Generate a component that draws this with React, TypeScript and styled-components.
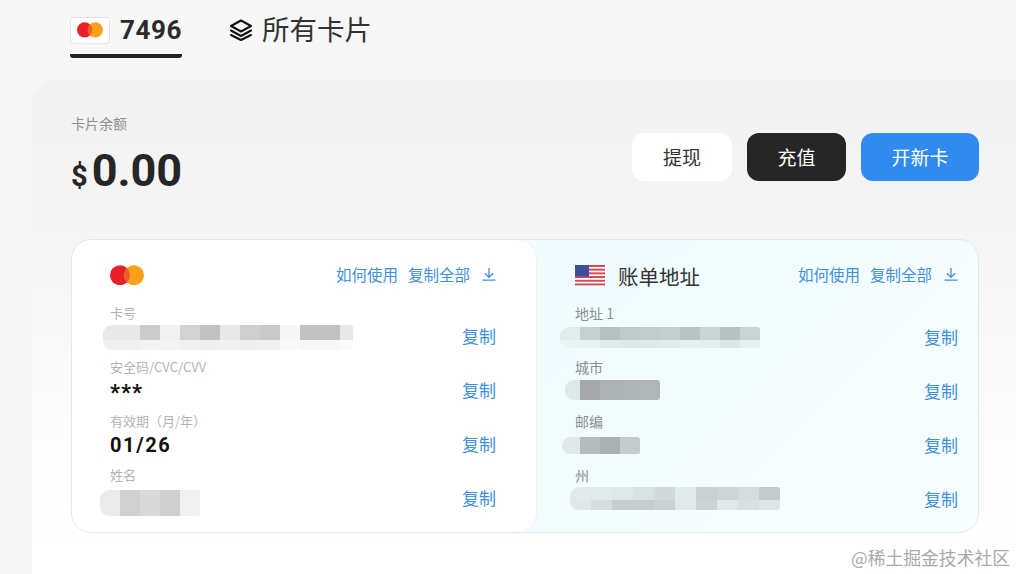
import React from "react";
import styled, { createGlobalStyle } from "styled-components";

const CJK = `"Noto Sans CJK SC", "Noto Sans", sans-serif`;

const GlobalStyle = createGlobalStyle`
  html, body {
    margin: 0;
    height: 574px;
    overflow: hidden;
    background: #f7f7f7;
    font-family: ${CJK};
  }
`;

const Page = styled.div`
  position: relative;
  width: 1016px;
  height: 574px;
  overflow: hidden;
`;

const Tabs = styled.nav`
  display: flex;
  align-items: flex-start;
  gap: 47px;
  height: 80px;
  padding-left: 70px;
  box-sizing: border-box;
`;

const ActiveTab = styled.div`
  display: flex;
  align-items: center;
  gap: 10px;
  height: 58px;
  padding: 14px 0 8px;
  box-sizing: border-box;
  border-bottom: 4px solid #222;
  border-radius: 0 0 3px 3px;
`;

const LogoBox = styled.div`
  display: flex;
  align-items: center;
  justify-content: center;
  width: 40px;
  height: 27px;
  background: #fff;
  border: 1px solid #e2e2e2;
  border-radius: 4px;
  box-sizing: border-box;
`;

const CardDigits = styled.span`
  font-family: Roboto, sans-serif;
  font-weight: 700;
  font-size: 26px;
  letter-spacing: 0.6px;
  color: #2b2b2b;
`;

const PlainTab = styled.div`
  display: flex;
  align-items: center;
  gap: 9px;
  height: 60px;
  color: #333;
`;

const PlainTabTitle = styled.span`
  font-size: 27.5px;
  line-height: 1;
  margin-top: -3px;
`;

const Panel = styled.main`
  margin-left: 32px;
  height: 494px;
  padding: 32px 37px 0 39px;
  box-sizing: border-box;
  border-radius: 22px 0 0 0;
  background: linear-gradient(180deg, #f2f2f2 0%, #f5f5f5 30%, #fdfdfd 75%, #fff 100%);
`;

const BalanceRow = styled.section`
  display: flex;
  justify-content: space-between;
  height: 127px;
`;

const BalanceLabel = styled.div`
  font-size: 14px;
  line-height: 22px;
  color: #8f8f8f;
`;

const BalanceAmount = styled.div`
  display: flex;
  align-items: baseline;
  gap: 4px;
  margin-top: 9px;
  font-family: Roboto, sans-serif;
  font-weight: 700;
  color: #262626;
  font-size: 45px;
  line-height: 56px;
`;

const Currency = styled.span`
  font-size: 29px;
`;

const Actions = styled.div`
  display: flex;
  gap: 15px;
  padding-top: 21px;
  align-items: flex-start;
`;

const ActionButton = styled.button<{ $bg: string; $fg: string; $width: number }>`
  width: ${(p) => p.$width}px;
  height: 48px;
  border: 0;
  border-radius: 12px;
  background: ${(p) => p.$bg};
  color: ${(p) => p.$fg};
  font-family: ${CJK};
  font-size: 19px;
  padding: 0 0 2px;
`;

const CardSheet = styled.section`
  display: grid;
  grid-template-columns: 464px 1fr;
  width: 908px;
  height: 294px;
  box-sizing: border-box;
  border: 1px solid #e4e7e9;
  border-radius: 20px;
  background: linear-gradient(135deg, #effbfd 0%, #f1fcfe 55%, #f9feff 100%);
  overflow: hidden;
`;

const CardSide = styled.div`
  padding: 0 40px 0 38px;
  background: #fff;
  border-radius: 0 20px 20px 0;
  box-shadow: 1px 0 1px #eef3f4;
`;

const BillingSide = styled.div`
  padding: 0 20px 0 39px;
`;

const SideHeader = styled.header`
  display: flex;
  align-items: center;
  justify-content: space-between;
  height: 64px;
  padding-top: 6px;
  box-sizing: border-box;
`;

const Brand = styled.div`
  display: flex;
  align-items: center;
  gap: 13px;
  margin-top: 2px;
  font-size: 20.5px;
  color: #333;
`;

const HeaderLinks = styled.div`
  display: flex;
  align-items: center;
  gap: 10px;
  margin-top: -2px;
  color: #3d8fe0;
  font-size: 15.5px;
  line-height: 20px;
`;

const DownloadGlyph = styled.svg`
  margin-left: 2px;
  fill: none;
  stroke: #3d8fe0;
  stroke-width: 1.3;
`;

const FieldRow = styled.div`
  display: flex;
  justify-content: space-between;
  align-items: flex-end;
  height: 54px;
`;

const FieldBody = styled.div`
  display: flex;
  flex-direction: column;
  height: 54px;
`;

const FieldLabel = styled.div<{ $dark?: boolean }>`
  font-size: ${(p) => (p.$dark ? 14 : 13)}px;
  line-height: 18px;
  color: ${(p) => (p.$dark ? "#8a8f90" : "#b4b4b4")};
  white-space: nowrap;
`;

const FieldValue = styled.div<{ $stars?: boolean }>`
  font-family: Roboto, sans-serif;
  font-weight: 700;
  font-size: ${(p) => (p.$stars ? 22 : 20)}px;
  letter-spacing: ${(p) => (p.$stars ? 1 : 1.6)}px;
  line-height: 26px;
  height: 26px;
  margin-top: ${(p) => (p.$stars ? 4 : 2)}px;
  color: #111;
`;

const CopyLink = styled.span<{ $dark?: boolean }>`
  font-size: 17px;
  line-height: 24px;
  color: #3d8fe0;
  margin-bottom: ${(p) => (p.$dark ? 9 : 10)}px;
`;

const Mosaic = styled.div<{ $shift: number; $top: number }>`
  display: flex;
  flex-direction: column;
  margin-left: -${(p) => p.$shift}px;
  margin-top: ${(p) => p.$top}px;
  border-radius: 9px 3px 3px 9px;
  overflow: hidden;
  width: max-content;
  filter: blur(0.5px);
`;

const MosaicLine = styled.div<{ $height: number }>`
  display: flex;
  height: ${(p) => p.$height}px;
`;

const MosaicCell = styled.div<{ $color: string; $size: number }>`
  width: ${(p) => p.$size}px;
  background: ${(p) => p.$color};
`;

const Watermark = styled.div`
  position: absolute;
  right: 6px;
  bottom: 6px;
  font-size: 17.8px;
  line-height: 22px;
  color: #a9a9a9;
`;

const MastercardMark = ({ width }: { width: number }) => (
  <svg width={width} height={width * 0.6} viewBox="0 0 34 20">
    <circle cx="10" cy="10" r="10" fill="#e8202a" />
    <circle cx="24" cy="10" r="10" fill="#f9a01b" />
    <path d="M17 2.8a10 10 0 0 1 0 14.4a10 10 0 0 1 0-14.4z" fill="#ef5e24" />
  </svg>
);

const StackIcon = () => (
  <svg width="24" height="24" viewBox="0 0 24 24" fill="none" stroke="#111" strokeWidth="2" strokeLinejoin="round" strokeLinecap="round">
    <path d="M12 2.5 22 8l-10 5.5L2 8z" />
    <path d="M2 12.5l10 5.5 10-5.5" />
    <path d="M2 17l10 5 10-5" />
  </svg>
);

const UsFlag = () => (
  <svg width="30" height="22" viewBox="0 0 30 22">
    <rect width="30" height="22" rx="2" fill="#fff" />
    {[0, 1, 2, 3, 4, 5].map((i) => (
      <rect key={i} y={i * 3.7} width="30" height="1.9" fill="#d9434e" />
    ))}
    <rect width="14" height="11.5" fill="#3f4f9b" />
  </svg>
);

interface MosaicCellData {
  color: string;
  size?: number;
}

interface MosaicData {
  shift: number;
  top: number;
  size: number;
  lines: { height: number; cells: (string | MosaicCellData)[] }[];
}

interface Field {
  label: string;
  value?: string;
  stars?: boolean;
  mosaic?: MosaicData;
}

const cardFields: Field[] = [
  {
    label: "卡号",
    mosaic: {
      shift: 7,
      top: 3,
      size: 20,
      lines: [
        {
          height: 15,
          cells: [{ color: "#e8e8e8", size: 37 }, "#cbcbcb", "#f0f0f0", "#d2d2d2", "#c2c2c2", "#e8e8e8", "#cecece", "#c9c9c9", "#f6f6f6", "#c2c2c2", "#c2c2c2", { color: "#e8e8e8", size: 13 }],
        },
        {
          height: 10,
          cells: [{ color: "#f0f0f0", size: 37 }, "#f3f3f3", "#f4f4f4", "#f0f0f0", "#efefef", "#f1f1f1", "#efefef", "#f0f0f0", "#f9f9f9", "#f7f7f7", "#f7f7f7", { color: "#fbfbfb", size: 13 }],
        },
      ],
    },
  },
  { label: "安全码/CVC/CVV", value: "***", stars: true },
  { label: "有效期（月/年）", value: "01/26" },
  {
    label: "姓名",
    mosaic: {
      shift: 10,
      top: 6,
      size: 20,
      lines: [{ height: 26, cells: ["#ebebeb", "#d0d0d0", "#d9d9d9", "#cfcfcf", "#f1f1f1"] }],
    },
  },
];

const billingFields: Field[] = [
  {
    label: "地址 1",
    mosaic: {
      shift: 15,
      top: 5,
      size: 20,
      lines: [
        { height: 13, cells: ["#e2eced", "#c4cfcf", "#b5c0c0", "#c0caca", "#c2cccc", "#c4cecf", "#b8c4c4", "#c9d4d4", "#b6c1c1", "#c8d3d3"] },
        { height: 8, cells: ["#eaf4f5", "#e8f1f2", "#e2ecec", "#dfe9ea", "#dfe9ea", "#e1ebec", "#e6f0f0", "#e4eeee", "#dde7e8", "#e6f0f0"] },
      ],
    },
  },
  {
    label: "城市",
    mosaic: {
      shift: 10,
      top: 4,
      size: 20,
      lines: [{ height: 20, cells: [{ color: "#dfe8e9", size: 15 }, "#a4a8aa", "#adb3b4", "#aeb4b4", "#b0b6b6"] }],
    },
  },
  {
    label: "邮编",
    mosaic: {
      shift: 13,
      top: 7,
      size: 20,
      lines: [{ height: 17, cells: [{ color: "#e0e8e9", size: 18 }, "#b4bcbc", "#a9b1b1", "#c4cccc"] }],
    },
  },
  {
    label: "州",
    mosaic: {
      shift: 5,
      top: 3,
      size: 21,
      lines: [
        { height: 13, cells: ["#e2ebec", "#e0eaea", "#dfe8e8", "#d8e2e2", "#d0dada", "#e0ecec", "#c8d2d2", "#ccd6d6", "#d4dede", "#c2cccc"] },
        { height: 10, cells: ["#dfe7e8", "#d5dddd", "#c6cece", "#c6cece", "#cad2d2", "#e0eaea", "#ccd4d4", "#e0e8e8", "#d8e0e0", "#dde5e5"] },
      ],
    },
  },
];

const FieldList = ({ fields, dark }: { fields: Field[]; dark?: boolean }) => (
  <>
    {fields.map((field) => (
      <FieldRow key={field.label}>
        <FieldBody>
          <FieldLabel $dark={dark}>{field.label}</FieldLabel>
          {field.value && <FieldValue $stars={field.stars}>{field.value}</FieldValue>}
          {field.mosaic && (
            <Mosaic $shift={field.mosaic.shift} $top={field.mosaic.top}>
              {field.mosaic.lines.map((line, i) => (
                <MosaicLine key={i} $height={line.height}>
                  {line.cells.map((cell, j) =>
                    typeof cell === "string" ? (
                      <MosaicCell key={j} $color={cell} $size={field.mosaic!.size} />
                    ) : (
                      <MosaicCell key={j} $color={cell.color} $size={cell.size ?? field.mosaic!.size} />
                    ),
                  )}
                </MosaicLine>
              ))}
            </Mosaic>
          )}
        </FieldBody>
        <CopyLink $dark={dark}>复制</CopyLink>
      </FieldRow>
    ))}
  </>
);

const SideLinks = () => (
  <HeaderLinks>
    <span>如何使用</span>
    <span>复制全部</span>
    <DownloadGlyph width="14" height="14" viewBox="0 0 14 14">
      <path d="M7 1v9.2M2.8 6.2 7 10.4l4.2-4.2M.5 13.2h13" />
    </DownloadGlyph>
  </HeaderLinks>
);

export default function App() {
  return (
    <Page>
      <GlobalStyle />
      <Tabs>
        <ActiveTab>
          <LogoBox>
            <MastercardMark width={26} />
          </LogoBox>
          <CardDigits>7496</CardDigits>
        </ActiveTab>
        <PlainTab>
          <StackIcon />
          <PlainTabTitle>所有卡片</PlainTabTitle>
        </PlainTab>
      </Tabs>
      <Panel>
        <BalanceRow>
          <div>
            <BalanceLabel>卡片余额</BalanceLabel>
            <BalanceAmount>
              <Currency>$</Currency>0.00
            </BalanceAmount>
          </div>
          <Actions>
            <ActionButton $bg="#fff" $fg="#333" $width={100}>提现</ActionButton>
            <ActionButton $bg="#262626" $fg="#fff" $width={99}>充值</ActionButton>
            <ActionButton $bg="#308af0" $fg="#fff" $width={118}>开新卡</ActionButton>
          </Actions>
        </BalanceRow>
        <CardSheet>
          <CardSide>
            <SideHeader>
              <MastercardMark width={34} />
              <SideLinks />
            </SideHeader>
            <FieldList fields={cardFields} />
          </CardSide>
          <BillingSide>
            <SideHeader>
              <Brand>
                <UsFlag />
                账单地址
              </Brand>
              <SideLinks />
            </SideHeader>
            <FieldList fields={billingFields} dark />
          </BillingSide>
        </CardSheet>
      </Panel>
      <Watermark>@稀土掘金技术社区</Watermark>
    </Page>
  );
}
